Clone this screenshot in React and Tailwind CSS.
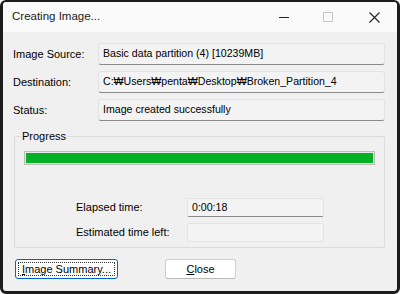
import React from 'react';

const font = { fontFamily: '"Segoe UI", "Liberation Sans", Arial, sans-serif' };

function Field({ children, className = '' }) {
  return (
    <div
      className={`flex items-center h-[22px] px-[4px] bg-[#f3f3f3] border border-[#e3e3e3] border-b-[#8a8a8a] rounded-[3px] text-[10.6px] text-black whitespace-nowrap overflow-hidden ${className}`}
    >
      {children}
    </div>
  );
}

function Row({ label, value }) {
  return (
    <div className="flex items-center">
      <div className="w-[85px] text-[11px] text-black">{label}</div>
      <Field className="flex-1">{value}</Field>
    </div>
  );
}

export default function App() {
  return (
    <div className="w-[400px] h-[294px] bg-white" style={font}>
      <div className="w-full h-full flex flex-col bg-[#f0f0f0] border-[#1c1c1c] border-t-2 border-x-[3px] border-b-[3px] rounded-[6px] overflow-hidden">
        {/* Title bar */}
        <div className="h-[30px] flex items-center bg-[#fafafa] shrink-0">
          <div className="pl-[9px] text-[11.5px] text-[#1a1a1a] flex-1">Creating Image...</div>
          <div className="w-[46px] h-full flex items-center justify-center">
            <div className="w-[10px] h-px bg-[#222]" />
          </div>
          <div className="w-[46px] h-full flex items-center justify-center ml-[-2px]">
            <div className="w-[10px] h-[10px] border border-[#c4c4c4] rounded-[1px]" />
          </div>
          <div className="w-[46px] h-full flex items-center justify-center">
            <svg width="11" height="11" viewBox="0 0 11 11">
              <path d="M0.5 0.5 L10.5 10.5 M10.5 0.5 L0.5 10.5" stroke="#222" strokeWidth="1.1" />
            </svg>
          </div>
        </div>

        {/* Body */}
        <div className="flex-1 flex flex-col pt-[11px] pl-[10px] pr-[12px]">
          <div className="flex flex-col gap-[6px]">
            <Row label="Image Source:" value="Basic data partition (4) [10239MB]" />
            <Row label="Destination:" value="C:₩Users₩penta₩Desktop₩Broken_Partition_4" />
            <Row label="Status:" value="Image created successfully" />
          </div>

          {/* Progress group */}
          <div className="relative mt-[15px] ml-[1px] h-[112px] border border-[#dcdcdc] rounded-[2px]">
            <div className="absolute left-[6px] top-[-9px] px-[1px] bg-[#f0f0f0] text-[11px] text-black leading-[16px]">
              Progress
            </div>
            <div className="mt-[14px] mx-[9px] h-[14px] border border-[#bcbcbc] bg-[#e6e6e6] p-px">
              <div className="h-full w-full bg-[#06b025]" />
            </div>
            <div className="mt-[33px] flex flex-col gap-[6px]">
              <div className="flex items-center">
                <div className="w-[172px] pl-[61px] text-[11px] text-black">Elapsed time:</div>
                <div className="w-[137px] h-[19px] flex items-center px-[4px] bg-[#f3f3f3] border border-[#e3e3e3] border-b-[#8a8a8a] rounded-[2px] text-[10.6px] text-black">
                  0:00:18
                </div>
              </div>
              <div className="flex items-center">
                <div className="w-[172px] pl-[61px] text-[11px] text-black">Estimated time left:</div>
                <div className="w-[137px] h-[19px] bg-[#f3f3f3] border border-[#e3e3e3] rounded-[2px]" />
              </div>
            </div>
          </div>

          {/* Buttons */}
          <div className="mt-[11px] flex items-center gap-[47px] pl-[2px]">
            <button className="w-[103px] h-[20px] rounded-[3px] border border-[#0067c0] bg-white p-[2px] text-[11px] text-black">
              <div className="w-full h-full flex items-center justify-center border border-dotted border-[#333]">
                <span><span className="underline">I</span>mage Summary...</span>
              </div>
            </button>
            <button className="w-[71px] h-[20px] rounded-[3px] border border-[#d0d0d0] border-b-[#b8b8b8] bg-white text-[11px] text-black flex items-center justify-center">
              <span><span className="underline">C</span>lose</span>
            </button>
          </div>
        </div>
      </div>
    </div>
  );
}
